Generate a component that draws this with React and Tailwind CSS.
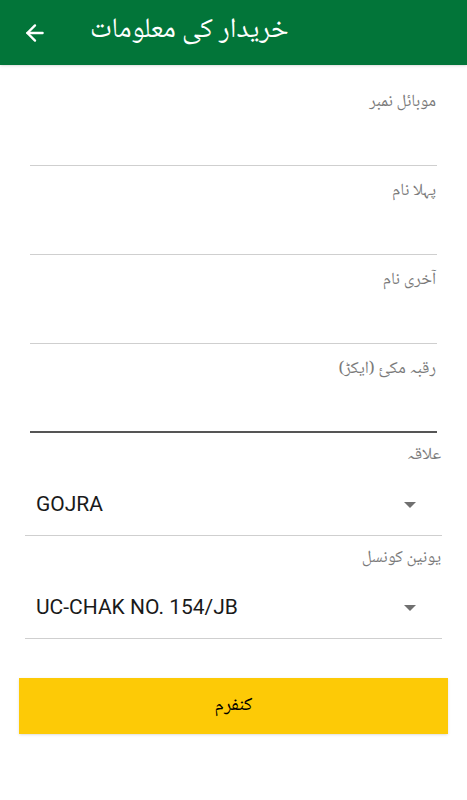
import { ArrowLeft } from 'lucide-react'

const urdu = { fontFamily: '"Noto Naskh Arabic", "Noto Sans Arabic", "DejaVu Sans", sans-serif' }
const latin = { fontFamily: 'Roboto, "Liberation Sans", sans-serif' }

function TextField({ label, focused }) {
  return (
    <div className="px-[30px]" dir="rtl">
      <div className="h-[89px] flex flex-col">
        <div className="pt-[14px] pr-[1px] text-[17px] leading-[24px] text-[#7a7a7a]" style={urdu}>
          {label}
        </div>
        <div className="flex-1" />
        <div className={focused ? 'h-[2px] bg-[#555]' : 'h-px bg-[#cfcfcf]'} />
      </div>
    </div>
  )
}

function Spinner({ label, value }) {
  return (
    <div className="px-[25px]">
      <div className="pt-[11px] text-right pr-[1px] text-[17px] leading-[24px] text-[#7a7a7a]" style={urdu} dir="rtl">
        {label}
      </div>
      <div className="mt-[7px] h-[60px] flex items-center justify-between pl-[11px] pr-[26px]">
        <span className="text-[21px] text-[#1a1a1a]" style={latin}>{value}</span>
        <span className="w-0 h-0 border-l-[6px] border-r-[6px] border-t-[6px] border-l-transparent border-r-transparent border-t-[#707070]" />
      </div>
      <div className="h-px bg-[#cfcfcf]" />
    </div>
  )
}

export default function App() {
  return (
    <div className="w-[467px] h-[800px] bg-white relative overflow-hidden">
      {/* Toolbar */}
      <div className="h-[65px] bg-[#027539] flex items-center shadow-sm">
        <ArrowLeft size={26} strokeWidth={2.2} className="text-white ml-[22px]" />
        <h1 className="ml-[42px] text-white text-[28px] leading-none pb-[3px]" style={urdu}>
          خریدار کی معلومات
        </h1>
      </div>

      {/* Form */}
      <div className="pt-[12px]">
        <TextField label="موبائل نمبر" />
        <TextField label="پہلا نام" />
        <TextField label="آخری نام" />
        <TextField label="رقبہ مکئ (ایکڑ)" focused />
        <Spinner label="علاقہ" value="GOJRA" />
        <Spinner label="یونین کونسل" value="UC-CHAK NO. 154/JB" />
      </div>

      <div className="px-[19px] pt-[39px]">
        <button className="w-full h-[56px] bg-[#fdca06] text-black text-[19px] shadow-sm" style={urdu}>
          کنفرم
        </button>
      </div>
    </div>
  )
}
